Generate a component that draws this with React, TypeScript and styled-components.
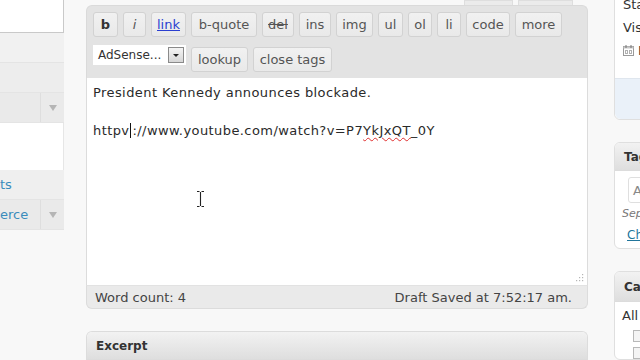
import React from "react";
import styled, { createGlobalStyle } from "styled-components";

const Global = createGlobalStyle`
  html, body { margin: 0; padding: 0; width: 640px; height: 360px; overflow: hidden; background: #f8f8f8; }
  body { font-family: "DejaVu Sans", Verdana, sans-serif; font-size: 13px; color: #333; }
  #root { width: 640px; height: 360px; overflow: hidden; }
`;

const Page = styled.div`
  display: flex;
  width: 640px;
  height: 360px;
  overflow: hidden;
  background: #f8f8f8;
`;

/* ---------- left admin menu ---------- */
const LeftNav = styled.nav`
  width: 64px;
  flex-shrink: 0;
  display: flex;
  flex-direction: column;
`;

const NavSearch = styled.div`
  height: 32px;
  background: #fff;
  border-right: 1px solid #c9c9c9;
  border-bottom: 1px solid #c9c9c9;
`;

const NavBand = styled.div<{ $bg: string; $h?: number }>`
  height: ${(p) => p.$h ?? 30}px;
  box-sizing: border-box;
  background: ${(p) => p.$bg};
  border-bottom: 1px solid #e4e4e4;
  display: flex;
  align-items: center;
  overflow: hidden;
`;

const NavLabel = styled.span`
  width: 40px;
  flex-shrink: 0;
  color: #3a8cbc;
  font-size: 13px;
  white-space: nowrap;
  overflow: hidden;
`;

const NavToggle = styled.span`
  width: 24px;
  align-self: stretch;
  border-left: 1px solid #dedede;
  display: flex;
  align-items: center;
  justify-content: center;
  &::after {
    content: "";
    border-left: 4px solid transparent;
    border-right: 4px solid transparent;
    border-top: 6px solid #b5b5b5;
  }
`;

const NavWhite = styled.div`
  height: 47px;
  background: #fff;
  border-right: 1px solid #e6e6e6;
`;

/* ---------- main editor ---------- */
const Main = styled.main`
  width: 502px;
  flex-shrink: 0;
  margin-left: 22px;
  display: flex;
  flex-direction: column;
`;

const TabStrip = styled.div`
  height: 5px;
  display: flex;
  justify-content: flex-end;
  gap: 5px;
  padding-right: 15px;
`;

const Tab = styled.div<{ $w: number }>`
  width: ${(p) => p.$w}px;
  background: #ebebeb;
  border: 1px solid #dedede;
  border-bottom: none;
`;

const Toolbar = styled.div`
  background: #e3e3e3;
  border-radius: 6px 6px 0 0;
  border: 1px solid #dadada;
  border-bottom: none;
  padding: 6px 6px 6px;
  display: flex;
  flex-direction: column;
  gap: 8px;
`;

const ButtonRow = styled.div<{ $second?: boolean }>`
  display: flex;
  gap: 5px;
  align-items: ${(p) => (p.$second ? "flex-end" : "center")};
  height: ${(p) => (p.$second ? 27 : 25)}px;
`;

const QButton = styled.button<{ $w: number; $kind?: string }>`
  width: ${(p) => p.$w}px;
  height: 25px;
  box-sizing: border-box;
  padding: 0;
  border: 1px solid #d2d2d2;
  border-radius: 3px;
  background: linear-gradient(#f1f1f1, #e9e9e9);
  font-family: "DejaVu Sans", Verdana, sans-serif;
  font-size: 13px;
  color: #555;
  display: flex;
  align-items: center;
  justify-content: center;
  font-weight: ${(p) => (p.$kind === "bold" ? "bold" : "normal")};
  font-style: ${(p) => (p.$kind === "italic" ? "italic" : "normal")};
  ${(p) => p.$kind === "link" && "color: #2b3fd0; text-decoration: underline;"}
  ${(p) => p.$kind === "del" && "text-decoration: line-through;"}
  ${(p) => p.$kind === "bold" && "color: #333;"}
`;

const Select = styled.div`
  align-self: flex-start;
  width: 93px;
  height: 20px;
  box-sizing: border-box;
  background: #fff;
  display: flex;
  align-items: center;
  justify-content: space-between;
  padding: 0 2px 0 5px;
  font-size: 12px;
  color: #333;
  white-space: nowrap;
`;

const SelectArrow = styled.span`
  width: 16px;
  height: 16px;
  flex-shrink: 0;
  box-sizing: border-box;
  border: 1px solid #8a8a8a;
  background: linear-gradient(#f4f4f4, #d6d6d6);
  display: flex;
  align-items: center;
  justify-content: center;
  &::after {
    content: "";
    border-left: 3px solid transparent;
    border-right: 3px solid transparent;
    border-top: 3px solid #222;
  }
`;

const TextArea = styled.div`
  position: relative;
  height: 207px;
  box-sizing: border-box;
  background: #fff;
  border-left: 1px solid #dcdcdc;
  border-right: 1px solid #dcdcdc;
  padding: 5px 6px;
  font-size: 13px;
  line-height: 19px;
  letter-spacing: 0.42px;
  color: #2a2a2a;
`;

const Line = styled.div`
  white-space: nowrap;
  min-height: 19px;
`;

const Caret = styled.span`
  display: inline-block;
  width: 1px;
  height: 15px;
  background: #111;
  vertical-align: -3px;
  margin: 0 1px 0 1px;
`;

const Misspelled = styled.span`
  text-decoration: underline wavy #e03030;
  text-decoration-thickness: 1px;
  text-underline-offset: 2px;
`;

const Grip = styled.svg`
  position: absolute;
  right: 3px;
  bottom: 3px;
`;

const MouseCursor = styled.svg`
  position: absolute;
  left: 109px;
  top: 112px;
`;

const StatusBar = styled.div`
  height: 24px;
  box-sizing: border-box;
  background: #eaeaea;
  border: 1px solid #dcdcdc;
  border-top: 1px solid #e2e2e2;
  border-radius: 0 0 6px 6px;
  display: flex;
  align-items: center;
  justify-content: space-between;
  padding: 0 15px 0 8px;
  font-size: 13px;
  color: #444;
`;

const PostBox = styled.section`
  margin-top: 22px;
  border: 1px solid #dcdcdc;
  border-bottom: none;
  border-radius: 6px 6px 0 0;
  overflow: hidden;
`;

const BoxHeader = styled.h3<{ $h?: number }>`
  margin: 0;
  height: ${(p) => p.$h ?? 28}px;
  box-sizing: border-box;
  display: flex;
  align-items: center;
  padding: 0 9px;
  background: linear-gradient(#f2f2f2, #dedede);
  border-bottom: 1px solid #dcdcdc;
  font-size: 12px;
  font-weight: bold;
  color: #333;
  white-space: nowrap;
`;

/* ---------- right sidebar ---------- */
const Sidebar = styled.aside`
  width: 290px;
  flex-shrink: 0;
  margin-left: 26px;
  display: flex;
  flex-direction: column;
  gap: 22px;
`;

const PublishBox = styled.section`
  margin-top: -8px;
  background: #fff;
  border: 1px solid #dfdfdf;
  border-radius: 0 0 6px 6px;
  display: flex;
  flex-direction: column;
`;

const MiscRow = styled.div`
  height: 23px;
  display: flex;
  align-items: center;
  gap: 4px;
  padding-left: 8px;
  font-size: 13px;
  color: #333;
  white-space: nowrap;
`;

const MiscList = styled.div`
  padding-bottom: 16px;
`;

const MajorActions = styled.div`
  height: 40px;
  background: #eaf1f9;
  border-top: 1px solid #dfe6ee;
  border-radius: 0 0 6px 6px;
`;

const SideBox = styled.section`
  background: #fff;
  border: 1px solid #dfdfdf;
  border-radius: 6px;
  overflow: hidden;
`;

const SideBody = styled.div`
  padding: 6px 8px 6px 7px;
  display: flex;
  flex-direction: column;
`;

const TagInput = styled.div`
  margin-left: 6px;
  width: 150px;
  height: 26px;
  box-sizing: border-box;
  border: 1px solid #dfdfdf;
  border-radius: 3px;
  display: flex;
  align-items: center;
  padding-left: 4px;
  font-size: 13px;
  color: #888;
`;

const Hint = styled.div`
  margin-top: 4px;
  font-size: 11px;
  font-style: italic;
  color: #777;
  line-height: 14px;
  white-space: nowrap;
`;

const CloudLink = styled.a`
  margin-top: 7px;
  margin-left: 5px;
  font-size: 12px;
  line-height: 14px;
  color: #21759b;
  text-decoration: underline;
  white-space: nowrap;
`;

const CatTabs = styled.div`
  padding: 6px 8px 0 7px;
  font-size: 13px;
  color: #333;
  white-space: nowrap;
  line-height: 16px;
`;

const CatList = styled.div`
  padding: 6px 0 0 18px;
  display: flex;
  flex-direction: column;
  gap: 5px;
`;

const Check = styled.span`
  display: block;
  width: 10px;
  height: 10px;
  border: 1px solid #b8b8b8;
  background: #f4f4f4;
`;

const CalendarIcon = () => (
  <svg width="11" height="11" viewBox="0 0 11 11">
    <rect x="0.5" y="1.5" width="10" height="9" fill="#fff" stroke="#9a9a9a" />
    <rect x="0.5" y="1.5" width="10" height="2" fill="#c8c8c8" />
    <line x1="3" y1="0" x2="3" y2="3" stroke="#777" />
    <line x1="8" y1="0" x2="8" y2="3" stroke="#777" />
    <rect x="2.5" y="5.5" width="2" height="3" fill="none" stroke="#b0b0b0" />
    <rect x="6.5" y="5.5" width="2" height="3" fill="none" stroke="#b0b0b0" />
  </svg>
);

const row1 = [
  { t: "b", w: 25, k: "bold" },
  { t: "i", w: 23, k: "italic" },
  { t: "link", w: 35, k: "link" },
  { t: "b-quote", w: 66 },
  { t: "del", w: 32, k: "del" },
  { t: "ins", w: 32 },
  { t: "img", w: 37 },
  { t: "ul", w: 25 },
  { t: "ol", w: 24 },
  { t: "li", w: 24 },
  { t: "code", w: 44 },
  { t: "more", w: 47 },
];

export default function App() {
  return (
    <>
      <Global />
      <Page>
        <LeftNav>
          <NavSearch />
          <NavBand $bg="#f1f1f1" />
          <NavBand $bg="#ededed" />
          <NavBand $bg="#eaeaea">
            <NavLabel />
            <NavToggle />
          </NavBand>
          <NavWhite />
          <NavBand $bg="#efefef">
            <NavLabel>ts</NavLabel>
          </NavBand>
          <NavBand $bg="#eaeaea">
            <NavLabel>erce</NavLabel>
            <NavToggle />
          </NavBand>
        </LeftNav>

        <Main>
          <TabStrip>
            <Tab $w={47} />
            <Tab $w={53} />
          </TabStrip>
          <Toolbar>
            <ButtonRow>
              {row1.map((b) => (
                <QButton key={b.t} $w={b.w} $kind={b.k}>
                  {b.t}
                </QButton>
              ))}
            </ButtonRow>
            <ButtonRow $second>
              <Select>
                AdSense...
                <SelectArrow />
              </Select>
              <QButton $w={57}>lookup</QButton>
              <QButton $w={79}>close tags</QButton>
            </ButtonRow>
          </Toolbar>
          <TextArea>
            <Line>President Kennedy announces blockade.</Line>
            <Line />
            <Line>
              httpv<Caret />://www.youtube.com/watch?v=P7<Misspelled>YkJxQT</Misspelled>_0Y
            </Line>
            <MouseCursor width="9" height="18" viewBox="0 0 9 18">
              <path d="M1 1.5h2.5M5.5 1.5H8M4.5 2v14M1 16.5h2.5M5.5 16.5H8" stroke="#fff" strokeWidth="2.6" fill="none" />
              <path d="M1 1.5h2.5M5.5 1.5H8M4.5 2v14M1 16.5h2.5M5.5 16.5H8" stroke="#222" strokeWidth="1.1" fill="none" />
            </MouseCursor>
            <Grip width="8" height="8" viewBox="0 0 8 8">
              <rect x="6" y="0" width="1.2" height="1.2" fill="#b5b5b5" />
              <rect x="6" y="3" width="1.2" height="1.2" fill="#b5b5b5" />
              <rect x="3" y="3" width="1.2" height="1.2" fill="#b5b5b5" />
              <rect x="6" y="6" width="1.2" height="1.2" fill="#b5b5b5" />
              <rect x="3" y="6" width="1.2" height="1.2" fill="#b5b5b5" />
              <rect x="0" y="6" width="1.2" height="1.2" fill="#b5b5b5" />
            </Grip>
          </TextArea>
          <StatusBar>
            <span>Word count: 4</span>
            <span>Draft Saved at 7:52:17 am.</span>
          </StatusBar>
          <PostBox>
            <BoxHeader>Excerpt</BoxHeader>
          </PostBox>
        </Main>

        <Sidebar>
          <PublishBox>
            <MiscList>
              <MiscRow>Status: Draft</MiscRow>
              <MiscRow>Visibility: Public</MiscRow>
              <MiscRow>
                <CalendarIcon />
                Publish immediately
              </MiscRow>
            </MiscList>
            <MajorActions />
          </PublishBox>
          <SideBox>
            <BoxHeader>Tags</BoxHeader>
            <SideBody>
              <TagInput>Add new tag</TagInput>
              <Hint>Separate tags with commas.</Hint>
              <CloudLink>Choose from the most used tags</CloudLink>
            </SideBody>
          </SideBox>
          <SideBox>
            <BoxHeader $h={30}>Categories</BoxHeader>
            <CatTabs>All Categories</CatTabs>
            <CatList>
              <Check />
              <Check />
            </CatList>
          </SideBox>
        </Sidebar>
      </Page>
    </>
  );
}
